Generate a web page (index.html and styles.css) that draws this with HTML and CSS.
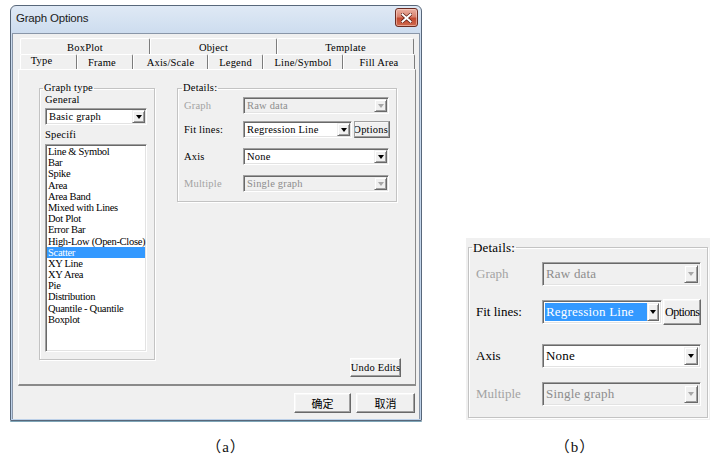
FILE: index.html
```html
<!DOCTYPE html>
<html>
<head>
<meta charset="utf-8">
<title>Graph Options</title>
<link rel="stylesheet" href="styles.css">
</head>
<body>
<div class="page">
  <figure class="fig fig-a">
    <div class="window">
      <div class="titlebar">
        <span class="title">Graph Options</span>
        <span class="close">
          <svg width="11" height="10" viewBox="0 0 11 10"><path d="M1.5 1.5 L9.5 8.5 M9.5 1.5 L1.5 8.5" stroke="#5a1a10" stroke-width="3.4" stroke-linecap="square"/><path d="M1.5 1.5 L9.5 8.5 M9.5 1.5 L1.5 8.5" stroke="#ffffff" stroke-width="2" stroke-linecap="square"/></svg>
        </span>
      </div>
      <div class="client">
        <div class="tabrow back">
          <div class="tab t-box">BoxPlot</div>
          <div class="tab t-obj">Object</div>
          <div class="tab t-tpl">Template</div>
        </div>
        <div class="tabrow front">
          <div class="tab t-type sel">Type</div>
          <div class="tab t-frame">Frame</div>
          <div class="tab t-axis">Axis/Scale</div>
          <div class="tab t-legend">Legend</div>
          <div class="tab t-line">Line/Symbol</div>
          <div class="tab t-fill">Fill Area</div>
        </div>
        <div class="tabpage">
          <fieldset class="group gtype">
            <legend>Graph type</legend>
            <div class="lbl">General</div>
            <div class="combo c-basic"><span class="val">Basic graph</span><span class="arrow"><i class="tri"></i></span></div>
            <div class="lbl lbl-spec">Specifi</div>
            <ul class="list">
              <li>Line &amp; Symbol</li>
              <li>Bar</li>
              <li>Spike</li>
              <li>Area</li>
              <li>Area Band</li>
              <li>Mixed with Lines</li>
              <li>Dot Plot</li>
              <li>Error Bar</li>
              <li>High-Low (Open-Close)</li>
              <li class="on">Scatter</li>
              <li>XY Line</li>
              <li>XY Area</li>
              <li>Pie</li>
              <li>Distribution</li>
              <li>Quantile - Quantile</li>
              <li>Boxplot</li>
            </ul>
          </fieldset>
          <div class="col2">
            <fieldset class="group details">
              <legend>Details:</legend>
              <div class="row r1">
                <span class="rlbl dis">Graph</span>
                <div class="combo wide dis"><span class="val">Raw data</span><span class="arrow"><i class="tri"></i></span></div>
              </div>
              <div class="row r2">
                <span class="rlbl">Fit lines:</span>
                <div class="combo fit"><span class="val">Regression Line</span><span class="arrow"><i class="tri"></i></span></div>
                <button class="btn opt"><span>Options</span></button>
              </div>
              <div class="row r3">
                <span class="rlbl">Axis</span>
                <div class="combo wide"><span class="val">None</span><span class="arrow"><i class="tri"></i></span></div>
              </div>
              <div class="row r4">
                <span class="rlbl dis">Multiple</span>
                <div class="combo wide dis"><span class="val">Single graph</span><span class="arrow"><i class="tri"></i></span></div>
              </div>
            </fieldset>
            <button class="btn undo">Undo Edits</button>
          </div>
        </div>
        <div class="footer">
          <button class="btn cjk ok">确定</button>
          <button class="btn cjk cancel">取消</button>
        </div>
      </div>
    </div>
    <figcaption class="cap cap-a">（a）</figcaption>
  </figure>

  <figure class="fig fig-b">
    <div class="zoompanel">
      <fieldset class="group details-b">
        <legend>Details:</legend>
        <div class="brow b1">
          <span class="blbl dis">Graph</span>
          <div class="combo bwide dis"><span class="val">Raw data</span><span class="arrow"><i class="tri"></i></span></div>
        </div>
        <div class="brow b2">
          <span class="blbl">Fit lines:</span>
          <div class="combo bfit"><span class="val"><span class="hl">Regression Line</span></span><span class="arrow"><i class="tri"></i></span></div>
          <button class="btn bopt"><span>Options</span></button>
        </div>
        <div class="brow b3">
          <span class="blbl">Axis</span>
          <div class="combo bwide"><span class="val">None</span><span class="arrow"><i class="tri"></i></span></div>
        </div>
        <div class="brow b4">
          <span class="blbl dis">Multiple</span>
          <div class="combo bwide dis"><span class="val">Single graph</span><span class="arrow"><i class="tri"></i></span></div>
        </div>
      </fieldset>
    </div>
    <figcaption class="cap cap-b">（b）</figcaption>
  </figure>
</div>
</body>
</html>
```

FILE: styles.css
```css
* { box-sizing: border-box; }

html, body {
  margin: 0;
  padding: 0;
  background: #ffffff;
}

body {
  width: 722px;
  height: 463px;
  overflow: hidden;
  font-family: "Liberation Serif", "Noto Sans CJK SC", serif;
  font-size: 10.5px;
  color: #000;
}

.page {
  display: flex;
  align-items: flex-start;
}

.fig {
  margin: 0;
  display: flex;
  flex-direction: column;
}

.fig-a {
  margin: 5px 0 0 10px;
  width: 412px;
}

.fig-b {
  margin: 238px 0 0 44px;
  width: 244px;
}

/* ---------- window ---------- */
.window {
  width: 412px;
  height: 416px;
  border: 1px solid #58677a;
  border-radius: 6px 6px 1px 1px;
  background: linear-gradient(180deg, #dfe9f5 0px, #cbdbee 30px, #bcd0e8 100%);
  padding: 0 1px 1px 1px;
  display: flex;
  flex-direction: column;
  box-shadow: 0 1px 0 #7fa6b8;
}

.titlebar {
  height: 27px;
  display: flex;
  align-items: flex-start;
  padding-left: 4px;
  flex: none;
}

.title {
  font-family: "Liberation Sans", "Noto Sans", sans-serif;
  font-size: 11.5px;
  letter-spacing: -0.2px;
  color: #1b1b1b;
  margin-top: 6px;
}

.close {
  margin-left: auto;
  margin-right: 2px;
  margin-top: 2px;
  width: 23px;
  height: 19px;
  border: 1px solid #6b2c22;
  border-radius: 3px;
  background: linear-gradient(180deg, #eab2a4 0%, #d9826e 45%, #c24a31 55%, #cf6a4e 100%);
  display: flex;
  align-items: center;
  justify-content: center;
  box-shadow: inset 0 0 0 1px rgba(255, 220, 210, 0.5);
}

.close svg { display: block; }

.client {
  flex: 1;
  background: #f0f0f0;
  border: 1px solid #8996a8;
  border-bottom: none;
  padding: 4px 3px 0 5px;
  display: flex;
  flex-direction: column;
}

/* ---------- tabs ---------- */
.tabrow {
  display: flex;
  margin-left: 2px;
}

.tabrow.back { height: 16px; }
.tabrow.front { height: 15px; }

.tab {
  display: flex;
  align-items: center;
  justify-content: center;
  border-top: 1px solid #ffffff;
  border-left: 1px solid #ffffff;
  border-right: 1px solid #7c7c7c;
  border-radius: 2px 2px 0 0;
  white-space: nowrap;
  letter-spacing: 0.2px;
  padding-top: 1px;
}

.t-box { width: 130px; }
.t-obj { width: 127px; }
.t-tpl { width: 137px; }

.t-type { width: 57px; padding-right: 14px; padding-top: 0; padding-bottom: 3px; }
.t-frame { width: 56px; padding-right: 6px; }
.t-axis { width: 75px; }
.t-legend { width: 55px; }
.t-line { width: 80px; }
.t-fill { width: 72px; }

/* ---------- tab page ---------- */
.tabpage {
  height: 317px;
  border-top: 1px solid #ffffff;
  border-left: 1px solid #ffffff;
  border-right: 1px solid #8a8a8a;
  border-bottom: 2px solid #8a8a8a;
  padding: 12px 12px 7px 20px;
  display: flex;
  gap: 22px;
}

.group {
  margin: 0;
  min-width: 0;
  border: 1px solid #c3c3c3;
  box-shadow: inset 1px 1px 0 #ffffff, 1px 1px 0 #ffffff;
}

.group legend {
  padding: 0 1px;
  margin-left: -2px;
  line-height: 12px;
  height: 12px;
  letter-spacing: 0.2px;
}

.gtype {
  width: 116px;
  height: 278px;
  padding: 0 6px 0 5px;
  display: flex;
  flex-direction: column;
}

.lbl {
  height: 12px;
  line-height: 12px;
  letter-spacing: 0.2px;
}

.lbl-spec { margin-top: 4px; }

/* ---------- combo ---------- */
.combo {
  height: 17px;
  display: flex;
  align-items: stretch;
  background: #ffffff;
  border-top: 1px solid #a0a0a0;
  border-left: 1px solid #a0a0a0;
  border-right: 1px solid #ffffff;
  border-bottom: 1px solid #ffffff;
  box-shadow: inset 1px 1px 0 #696969, inset -1px -1px 0 #e3e3e3;
  padding: 1px 1px 1px 1px;
}

.combo .val {
  flex: 1;
  display: flex;
  align-items: center;
  padding-left: 2px;
  white-space: nowrap;
  overflow: hidden;
  letter-spacing: 0.2px;
}

.combo .arrow {
  width: 13px;
  flex: none;
  background: #f0f0f0;
  border-top: 1px solid #f0f0f0;
  border-left: 1px solid #f0f0f0;
  border-right: 1px solid #696969;
  border-bottom: 1px solid #696969;
  box-shadow: inset 1px 1px 0 #ffffff, inset -1px -1px 0 #a0a0a0;
  display: flex;
  align-items: center;
  justify-content: center;
}

.tri {
  display: block;
  width: 0;
  height: 0;
  border-left: 3.5px solid transparent;
  border-right: 3.5px solid transparent;
  border-top: 4px solid #000000;
}

.combo.dis { background: #f0f0f0; }
.combo.dis .val { color: #8d8d8d; }
.combo.dis .tri { border-top-color: #a7a7a7; }

.c-basic { margin-top: 2px; width: 102px; }

/* ---------- list ---------- */
.list {
  list-style: none;
  margin: 3px 0 0 0;
  padding: 0 1px;
  width: 102px;
  height: 208px;
  background: #ffffff;
  border-top: 1px solid #a0a0a0;
  border-left: 1px solid #a0a0a0;
  border-right: 1px solid #ffffff;
  border-bottom: 1px solid #ffffff;
  box-shadow: inset 1px 1px 0 #696969, inset -1px -1px 0 #e3e3e3;
  padding-top: 1px;
  overflow: hidden;
}

.list li {
  height: 11.2px;
  line-height: 11.2px;
  padding-left: 1px;
  white-space: nowrap;
  letter-spacing: -0.3px;
}

.list li.on {
  background: #3399ff;
  color: #ffffff;
}

/* ---------- details ---------- */
.col2 {
  display: flex;
  flex-direction: column;
  width: 224px;
}

.details {
  width: 220px;
  height: 120px;
  padding: 0 6px 0 6px;
  display: flex;
  flex-direction: column;
}

.row {
  display: flex;
  align-items: center;
}

.r1 { margin-top: 3px; }
.r2 { margin-top: 7px; }
.r3 { margin-top: 10px; }
.r4 { margin-top: 10px; }

.rlbl {
  width: 59px;
  flex: none;
  white-space: nowrap;
  letter-spacing: 0.2px;
}

.rlbl.dis, .blbl.dis { color: #a3a3a3; }

.combo.wide { width: 146px; }
.combo.fit { width: 111px; }

/* ---------- buttons ---------- */
.btn {
  font: inherit;
  color: #000;
  margin: 0;
  padding: 0;
  background: #f0f0f0;
  border-top: 1px solid #ffffff;
  border-left: 1px solid #ffffff;
  border-right: 1px solid #696969;
  border-bottom: 1px solid #696969;
  box-shadow: inset -1px -1px 0 #a0a0a0, inset 1px 1px 0 #f7f7f7;
  display: flex;
  align-items: center;
  justify-content: center;
  white-space: nowrap;
  overflow: hidden;
  letter-spacing: 0.2px;
}

.btn.opt {
  width: 36px;
  height: 17px;
  margin-left: 2px;
  justify-content: flex-end;
  padding-right: 1px;
  border-top-color: #a0a0a0;
  border-left-color: #a0a0a0;
}

.btn.undo {
  margin-top: auto;
  align-self: flex-end;
  width: 51px;
  height: 19px;
}

.footer {
  height: 33px;
  display: flex;
  justify-content: flex-end;
  gap: 5px;
  padding-top: 7px;
  padding-right: 1px;
}

.btn.cjk {
  font-family: "Noto Sans CJK SC", sans-serif;
  font-size: 11px;
  height: 20px;
  letter-spacing: 0;
}

.btn.ok { width: 57px; }
.btn.cancel { width: 59px; }

/* ---------- captions ---------- */
.cap {
  font-family: "Liberation Serif", "Noto Sans CJK SC", serif;
  font-size: 15px;
  line-height: 18px;
  letter-spacing: 1px;
  text-align: center;
  color: #111;
}

.cap-a { margin-top: 17px; padding-left: 20px; }
.cap-b { margin-top: 18px; padding-right: 26px; }

/* ---------- panel b ---------- */
.zoompanel {
  width: 244px;
  height: 182px;
  background: #f0f0f0;
  padding: 2px 2px 2px 2px;
}

.details-b {
  width: 240px;
  height: 178px;
  padding: 0 6px 0 7px;
  display: flex;
  flex-direction: column;
  font-size: 13px;
}

.details-b legend {
  line-height: 15px;
  height: 15px;
  margin-left: -4px;
  padding: 0 1px;
}

.brow {
  display: flex;
  align-items: center;
}

.b1 { margin-top: 7px; }
.b2 { margin-top: 13px; }
.b3 { margin-top: 19px; }
.b4 { margin-top: 14px; }

.blbl {
  width: 66px;
  flex: none;
  white-space: nowrap;
  font-size: 13px;
}

.details-b .combo {
  height: 24px;
  font-size: 13px;
  padding: 2px;
}

.details-b .combo .val { padding-left: 1px; }

.details-b .combo .arrow { width: 14px; }

.combo.bwide { width: 160px; }
.combo.bfit { width: 122px; }

.hl {
  background: #3399ff;
  color: #ffffff;
  display: flex;
  align-items: center;
  height: 100%;
  width: 100%;
  padding-left: 1px;
}

.details-b .combo.bfit .val { padding-left: 0; }
.details-b .combo.bfit .arrow { width: 12px; }

.btn.bopt {
  width: 38px;
  height: 26px;
  margin-left: 1px;
  font-size: 12px;
  letter-spacing: -0.5px;
  justify-content: center;
  padding: 0;
}
```
